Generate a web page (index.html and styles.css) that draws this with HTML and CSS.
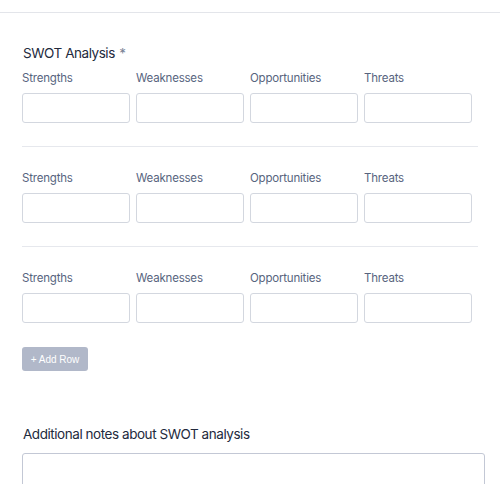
FILE: index.html
```html
<!DOCTYPE html>
<html>
<head>
<meta charset="utf-8">
<link rel="stylesheet" href="styles.css">
</head>
<body>
<div class="page">
  <div class="top-rule"></div>
  <section class="field swot">
    <div class="field-label">SWOT Analysis <span class="req">*</span></div>
    <div class="matrix">
      <div class="mrow">
        <div class="cell"><label>Strengths</label><div class="box"></div></div>
        <div class="cell"><label>Weaknesses</label><div class="box"></div></div>
        <div class="cell"><label>Opportunities</label><div class="box"></div></div>
        <div class="cell"><label>Threats</label><div class="box"></div></div>
      </div>
      <div class="mrow">
        <div class="cell"><label>Strengths</label><div class="box"></div></div>
        <div class="cell"><label>Weaknesses</label><div class="box"></div></div>
        <div class="cell"><label>Opportunities</label><div class="box"></div></div>
        <div class="cell"><label>Threats</label><div class="box"></div></div>
      </div>
      <div class="mrow">
        <div class="cell"><label>Strengths</label><div class="box"></div></div>
        <div class="cell"><label>Weaknesses</label><div class="box"></div></div>
        <div class="cell"><label>Opportunities</label><div class="box"></div></div>
        <div class="cell"><label>Threats</label><div class="box"></div></div>
      </div>
    </div>
    <button class="add-row">+ Add Row</button>
  </section>
  <section class="field notes">
    <div class="field-label">Additional notes about SWOT analysis</div>
    <div class="textarea"></div>
  </section>
</div>
</body>
</html>
```

FILE: styles.css
```css
html, body {
  margin: 0;
  padding: 0;
  background: #ffffff;
}
body {
  font-family: Inter, Roboto, sans-serif;
  color: #2c3345;
}
.page {
  padding-top: 12px;
}
.top-rule {
  height: 1px;
  background: #e3e5ea;
}
.field {
  padding: 0 22px;
}
.swot {
  padding-top: 31px;
  padding-right: 22px;
}
.field-label {
  font-size: 13.5px;
  letter-spacing: -0.45px;
  line-height: 18px;
  font-weight: 400;
  color: #232a3d;
  padding-left: 1px;
}
.req {
  color: #7a8396;
  margin-left: 1px;
}
.matrix {
  margin-top: 8px;
}
.mrow {
  display: flex;
  gap: 6px;
  padding-bottom: 23px;
  border-bottom: 1px solid #e6e8ed;
  margin-bottom: 23px;
}
.mrow:last-child {
  border-bottom: none;
  padding-bottom: 0;
  margin-bottom: 24px;
}
.cell {
  width: 108px;
  display: flex;
  flex-direction: column;
}
.cell label {
  font-size: 11.5px;
  letter-spacing: -0.2px;
  line-height: 16px;
  color: #57647e;
  height: 16px;
  margin-bottom: 7px;
}
.box {
  height: 28px;
  border: 1px solid #d3d7df;
  border-radius: 3px;
}
.add-row {
  display: block;
  width: 66px;
  height: 24px;
  padding: 0;
  border: none;
  border-radius: 3px;
  background: #b1b8c9;
  color: #ffffff;
  font-family: "Liberation Sans", Arial, sans-serif;
  font-size: 10px;
  cursor: pointer;
}
.notes {
  padding-top: 54px;
  padding-right: 15px;
}
.notes .field-label {
  margin-bottom: 10px;
}
.textarea {
  height: 60px;
  border: 1px solid #c3c8d5;
  border-radius: 3px;
}
```
